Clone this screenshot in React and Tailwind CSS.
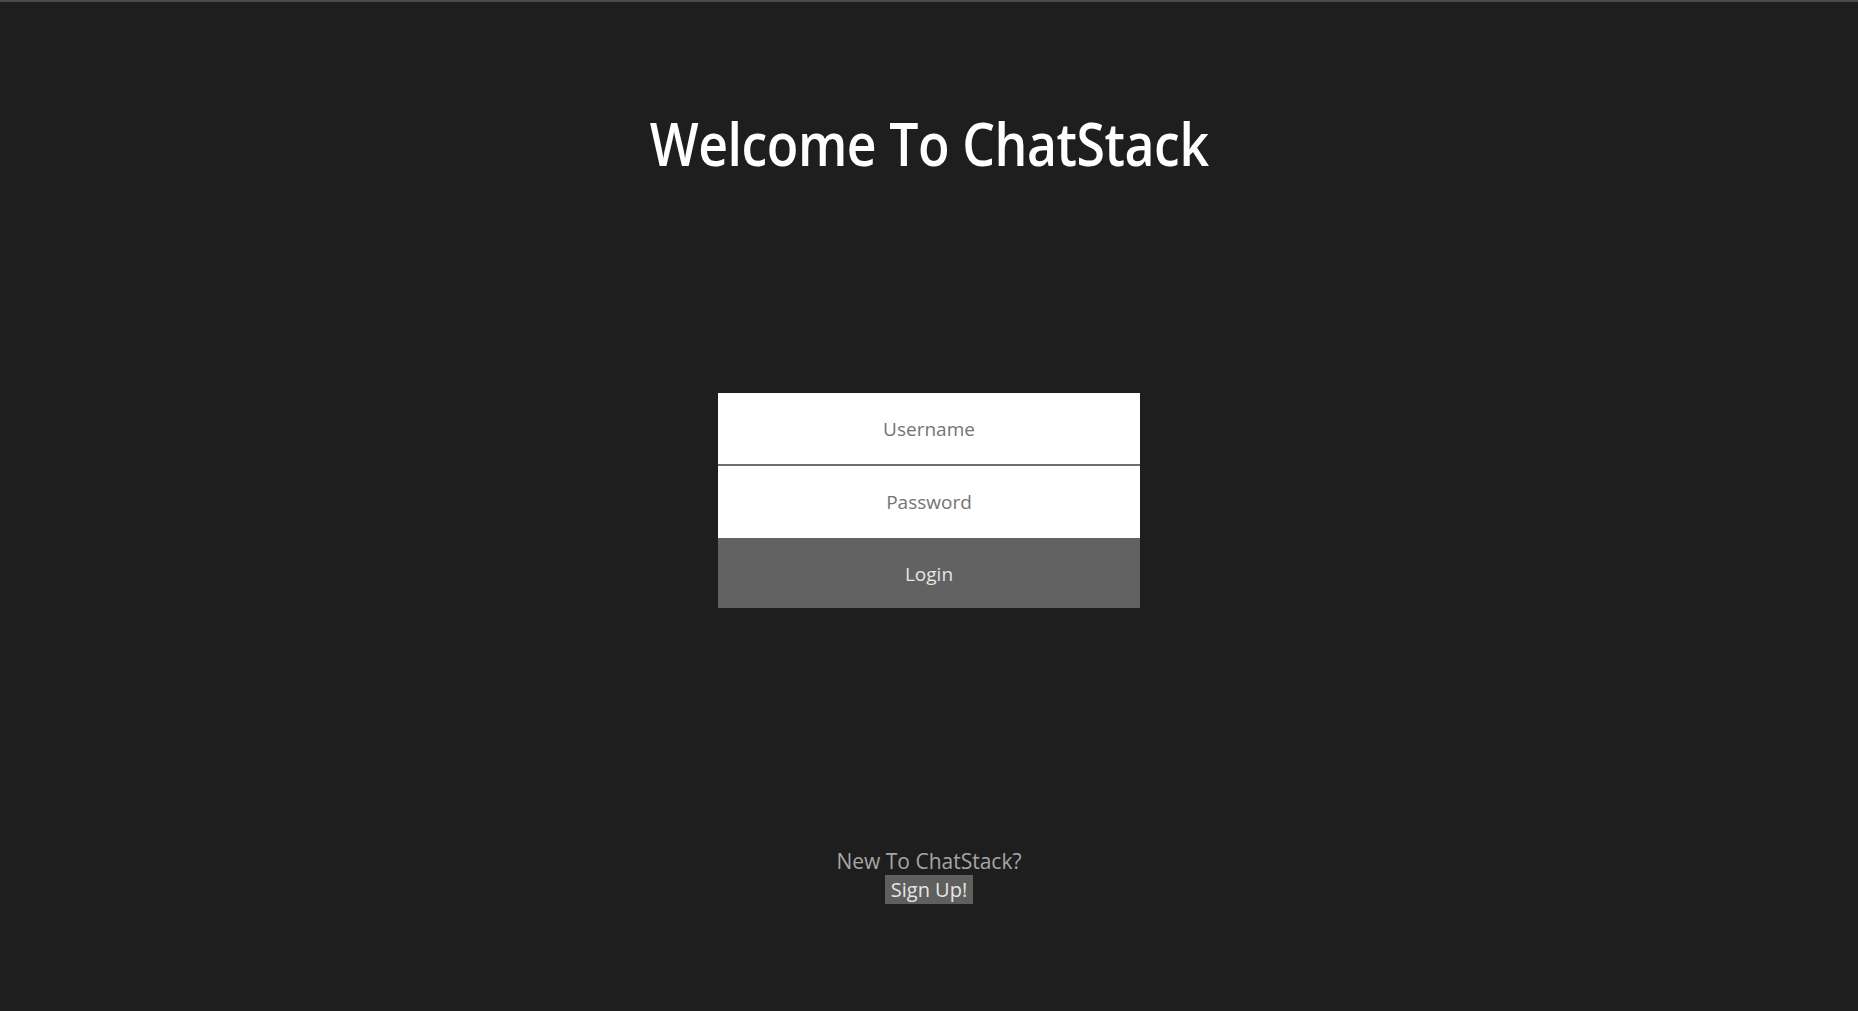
export default function App() {
  return (
    <div
      className="flex min-h-[1011px] flex-col items-center border-t-2 border-[#4a4a4a] bg-[#1e1e1e]"
      style={{ fontFamily: '"Open Sans", "Noto Sans", sans-serif' }}
    >
      <h1 className="mt-[111px] scale-x-[0.862] text-[60px] font-semibold leading-none tracking-[-0.5px] text-white">
        Welcome To ChatStack
      </h1>

      <form className="mt-[220px] flex w-[422px] flex-col" onSubmit={(e) => e.preventDefault()}>
        <input
          type="text"
          placeholder="Username"
          className="h-[73px] w-full border-b-2 border-[#6e6e6e] bg-white text-center text-[19px] text-[#333] outline-none placeholder:text-[#747474]"
        />
        <input
          type="password"
          placeholder="Password"
          className="h-[72px] w-full bg-white text-center text-[19px] text-[#333] outline-none placeholder:text-[#747474]"
        />
        <button type="submit" className="h-[70px] w-full bg-[#626262] pt-[2px] text-[19px] text-[#e6e6e6]">
          Login
        </button>
      </form>

      <div className="mt-[239px] flex flex-col items-center">
        <p className="text-[21px] leading-[28px] text-[#a6a6a6]">New To ChatStack?</p>
        <button className="h-[29px] bg-[#5f5f5f] px-[6px] text-[20px] leading-[29px] text-[#e6e6e6]">
          Sign Up!
        </button>
      </div>
    </div>
  );
}
